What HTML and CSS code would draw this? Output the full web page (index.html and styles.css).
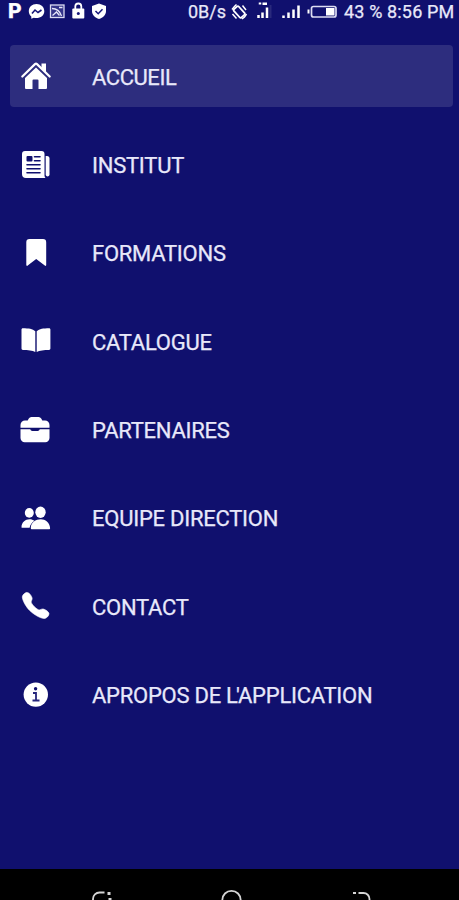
FILE: index.html
```
<!DOCTYPE html>
<html lang="fr">
<head>
    <meta charset="UTF-8" />
    <meta name="viewport" content="width=device-width, initial-scale=1.0"/>
    <title>Menu</title>
    <link rel="stylesheet" href="styles.css">
</head>
<body>
    <header class="status-bar">
        <div class="notifications">
            <span class="p-icon">P</span>
            <svg width="80" height="24" viewBox="26 0 80 24">
                <path d="M36.500 4c-4.500 0-7.700 3-7.700 7.200 0 2.200 1 4 2.500 5.300v2.300l2.500-1c5.800 1.200 10.500-2 10.500-6.600 0-4.200-3.300-7.200-7.800-7.200z" fill="#fff"/>
                <path d="M32 13.500l3-3.500 3 2.500 3.500-2.500" fill="none" stroke="#17177a" stroke-width="1.600"/>
                <rect x="50.500" y="5" width="13.500" height="12.500" fill="#34348a" stroke="#dcdcf2" stroke-width="1.300"/>
                <path d="M52 8.500c5 0 8 3 9.500 7.500M52.500 15.500l4-3.500 3 3.500M59 7.500h3.500" fill="none" stroke="#e8e8fa" stroke-width="1.300"/>
                <path d="M75.300 9V6.500a3 3 0 0 1 6 0V9" fill="none" stroke="#fff" stroke-width="1.800"/>
                <rect x="72.300" y="8.500" width="12" height="10" rx="1" fill="#fff"/>
                <circle cx="78.300" cy="13.500" r="1.500" fill="#17177a"/>
                <path d="M99 3.500l7 2.500v5c0 4-3 6.700-7 8-4-1.300-7-4-7-8V6z" fill="#fff"/>
                <path d="M95.500 11l2.700 2.700 4.300-4.500" fill="none" stroke="#17177a" stroke-width="1.500"/>
            </svg>
        </div>
        <div class="status-info">
            <span class="speed">0B/s</span>
            <svg class="indicators" width="110" height="24" viewBox="0 0 110 24">
                <!-- vibration -->
                <rect x="8" y="6.500" width="6.500" height="11" rx="1" transform="rotate(-42 11.250 12)" fill="none" stroke="#fff" stroke-width="1.800"/>
                <path d="M4 9.500l2.500-3 2-2M14 19l2.500-2 2-3M4.500 14l4 4.500M14.500 5.500l3.500 4.500" fill="none" stroke="#fff" stroke-width="1.500"/>
                <!-- signal -->
                <path d="M30.500 15v3M34.500 12.500V18M39 7.500v10.500" stroke="#fff" stroke-width="2.500"/>
                <path d="M32 2.500v2M34.500 3.800h4.500" stroke="#fff" stroke-width="2.500"/>
                <path d="M42.500 5v13" stroke="#29297c" stroke-width="2"/>
                <path d="M55.500 15.500V18M60.500 12.500V18M65.500 9.500V18M70.500 5.500V18" stroke="#fff" stroke-width="2.500"/>
                <!-- battery -->
                <path d="M80.500 9.500v4" stroke="#fff" stroke-width="2"/>
                <rect x="83.500" y="6.500" width="24.500" height="10.500" rx="2" fill="none" stroke="#dcdcf2" stroke-width="1.700"/>
                <rect x="98" y="8" width="8.500" height="7.500" fill="#fff"/>
            </svg>
            <span class="clock">43 % 8:56 PM</span>
        </div>
    </header>

    <nav class="menu">
        <a class="menu-item active">
            <svg class="icon" viewBox="0 0 32 32">
                <path d="M16 7.500L5 18V28a1 1 0 0 0 1 1h6.500v-8.500a1 1 0 0 1 1-1h4a1 1 0 0 1 1 1V29H26a1 1 0 0 0 1-1V18z"/>
                <path d="M2.300 16.500L15 4.100a1.500 1.500 0 0 1 2 0l12.700 12.400" fill="none" stroke="#fff" stroke-width="2.200" stroke-linecap="round"/>
                <path d="M21.500 3.500H26v9.500l-4.500-4.500z"/>
            </svg>
            <span class="accueil">ACCUEIL</span>
        </a>
        <a class="menu-item">
            <svg class="icon" viewBox="0 0 32 32">
                <path d="M5 2h16.500a3 3 0 0 1 3 3v21.500c0 1 .4 1.900 1 2.500H6a4 4 0 0 1-4-4V5a3 3 0 0 1 3-3z"/>
                <path d="M25.700 7H27a2.500 2.500 0 0 1 2.500 2.500V26a2 2 0 0 1-3.800 0z"/>
                <path d="M14.500 7.800H20M14.500 11.800H20M7 15.800h13M7 19.800h13M7 23.800h13" stroke="#10106e" stroke-width="1.600" stroke-linecap="round"/>
                <rect class="cut" x="6.500" y="7" width="6" height="5.500" rx="1"/>
            </svg>
            <span>INSTITUT</span>
        </a>
        <a class="menu-item">
            <svg class="icon" viewBox="0 0 32 32">
                <path d="M9.500 2h13.500a3.200 3.200 0 0 1 3.200 3.200V28a.8.8 0 0 1-1.400.6L16.200 22l-8.500 6.600a.8.8 0 0 1-1.400-.6V5.200A3.200 3.200 0 0 1 9.500 2z"/>
            </svg>
            <span>FORMATIONS</span>
        </a>
        <a class="menu-item">
            <svg class="icon" viewBox="0 0 32 32">
                <path d="M15.300 6.200C12.500 3.800 8.800 3.200 2.800 3.200c-.8 0-1.300.6-1.300 1.300v19c0 .8.600 1.400 1.400 1.400 5 0 9.600.3 12.400 2.100zM16.700 6.200c2.800-2.400 6.500-3 12.500-3 .7 0 1.200.6 1.200 1.300v19c0 .8-.6 1.400-1.400 1.400-5 0-9.500.3-12.300 2.100z"/>
            </svg>
            <span>CATALOGUE</span>
        </a>
        <a class="menu-item">
            <svg class="icon" viewBox="0 0 32 32">
                <path d="M.5 13.800V11A4.500 4.500 0 0 1 5 6.500h2.700l1.100-2A3 3 0 0 1 11.500 3h7A3 3 0 0 1 21.200 4.500l1.100 2H25a4.500 4.500 0 0 1 4.500 4.500v2.800z"/>
                <path d="M.5 15.300h9.800c.3 1.100 1 1.700 2 1.700h5.400c1 0 1.700-.6 2-1.700h9.800v8.700a4.200 4.200 0 0 1-4.200 4.200H4.700A4.200 4.200 0 0 1 .5 24z"/>
            </svg>
            <span>PARTENAIRES</span>
        </a>
        <a class="menu-item">
            <svg class="icon" viewBox="0 0 32 32">
                <ellipse cx="9.300" cy="10.900" rx="4.500" ry="4.800"/>
                <path d="M1.500 25.200c0-4.900 3.800-8 8-8 2 0 3.600.5 5 1.600-2.500 1.600-4.300 3.900-4.900 7H2.300c-.5 0-.8-.2-.8-.6z"/>
                <ellipse cx="20.500" cy="10.300" rx="5.200" ry="5.700"/>
                <path d="M20.800 17.200c-5 0-10 3-10 8.700 0 .7.500 1.300 1.200 1.300h16.900c.8 0 1.300-.6 1.200-1.300-.5-5.700-4.800-8.700-9.300-8.700z"/>
            </svg>
            <span>EQUIPE DIRECTION</span>
        </a>
        <a class="menu-item">
            <svg class="icon" viewBox="0 0 32 32">
                <path d="M24.300 28.500c-3.800 0-10.500-4-14.600-8C5.700 16.500 2.300 10 2.300 6.900c0-1.700 2.600-4.500 4.600-4.500 2.400 0 4.800 3.600 5.200 5.600.3 1.900-1.100 2.900-.9 4.200.4 2 5.500 7.200 7.700 7.700 1.400.3 2.500-1.200 4.300-.9 2.200.4 5.800 2.900 5.800 4.700 0 2.200-2.700 4.800-4.700 4.800z" stroke="#fff" stroke-width=".6"/>
            </svg>
            <span>CONTACT</span>
        </a>
        <a class="menu-item">
            <svg class="icon" viewBox="0 0 32 32">
                <circle cx="15.800" cy="15.600" r="12.200"/>
                <circle class="cut" cx="15.600" cy="9.800" r="1.700"/>
                <path d="M13 14h3v7.200M12.500 21.500h7" fill="none" stroke="#25257c" stroke-width="1.800"/>
            </svg>
            <span>APROPOS DE <span class="elision">L'</span>APPLICATION</span>
        </a>
    </nav>

    <footer class="nav-bar">
        <svg width="459" height="31" viewBox="0 0 459 31">
            <g fill="none" stroke="#d5d5d5" stroke-width="1.800">
                <path d="M93 32v-2a6.500 6.500 0 0 1 6.500-6.500h5"/>
                <path d="M107.500 24.500h3M108.500 30.500h3" stroke-width="3"/>
                <circle cx="231.500" cy="31" r="9.200"/>
                <path d="M353 24h3M358.500 24h5a6 6 0 0 1 6 6v2"/>
            </g>
        </svg>
    </footer>
</body>
</html>
```

FILE: styles.css
```
body {
    margin: 0;
    height: 900px;
    display: flex;
    flex-direction: column;
    overflow: hidden;
    background-color: #10106e;
    color: #e8e8fa;
    font-family: Roboto, sans-serif;
}
.status-bar {
    height: 24px;
    display: flex;
    justify-content: space-between;
    font-size: 18px;
    line-height: 24px;
    -webkit-text-stroke: 0.25px #e8e8fa;
}
.notifications {
    display: flex;
    padding-left: 8px;
}
.p-icon {
    width: 18px;
    color: #fff;
    font-size: 21px;
    font-weight: 900;
    line-height: 23px;
}
.status-info {
    display: flex;
    padding-right: 4px;
    white-space: nowrap;
}
.speed {
    width: 40px;
}
.indicators {
    margin-right: 6px;
}
.clock {
    width: 111px;
    letter-spacing: 0.15px;
}
.menu {
    flex: 1;
    display: flex;
    flex-direction: column;
    gap: 26px;
    padding: 21px 6px 0 10px;
}
.menu-item {
    box-sizing: border-box;
    height: 62.36px;
    display: flex;
    align-items: center;
    gap: 40px;
    padding-left: 10px;
    border-radius: 4px;
    font-size: 22px;
    letter-spacing: -0.25px;
    white-space: nowrap;
    -webkit-text-stroke: 0.25px #e8e8fa;
}
.menu-item > span {
    padding-top: 2px;
}
.menu-item .accueil {
    letter-spacing: -0.45px;
}
.elision {
    letter-spacing: -1.9px;
}
.active {
    background-color: #2d2d7e;
}
.icon {
    width: 32px;
    height: 32px;
    flex-shrink: 0;
    fill: #fff;
}
.icon .cut {
    fill: #10106e;
}
.nav-bar {
    height: 31px;
    background-color: #000;
}
.nav-bar svg {
    display: block;
}
```
